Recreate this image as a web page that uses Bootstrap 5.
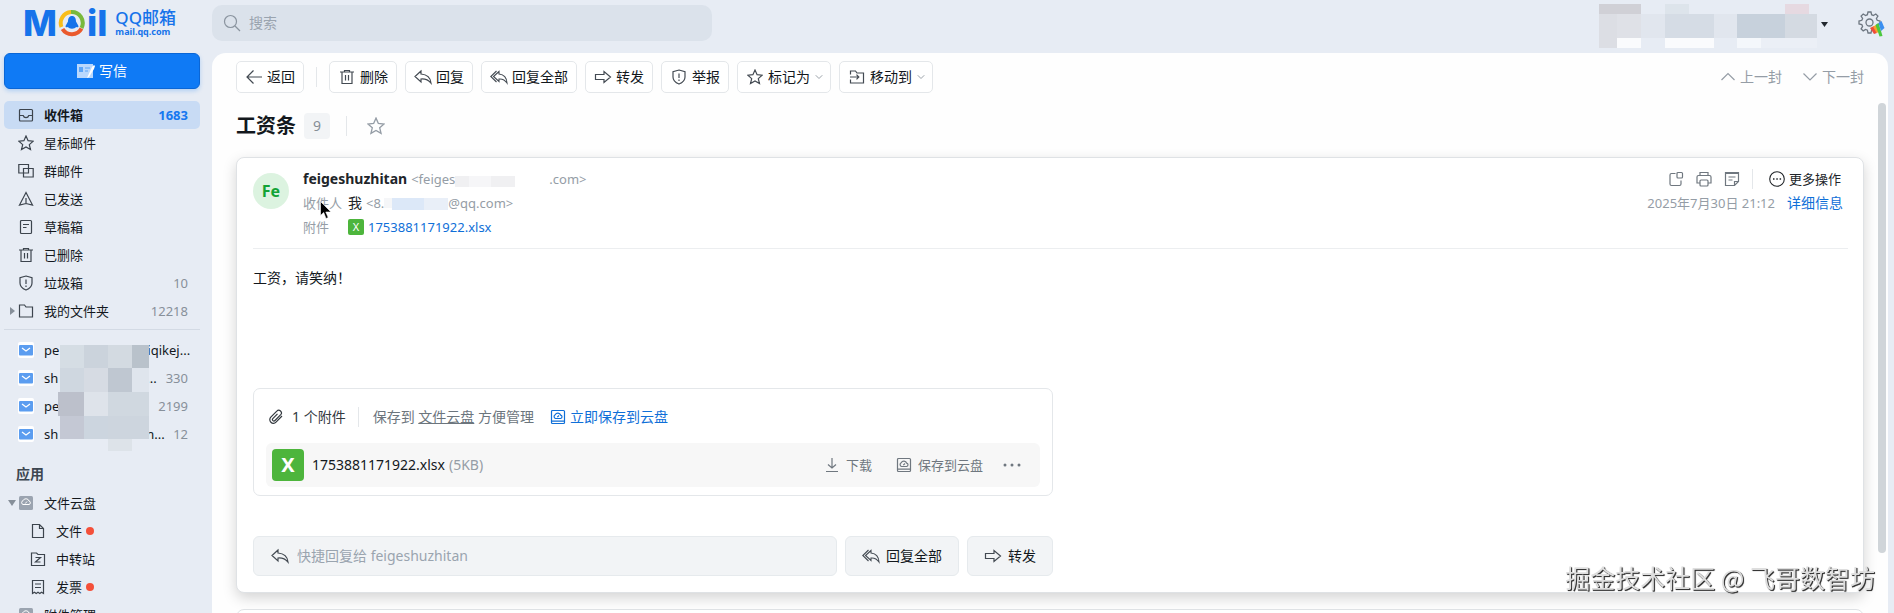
<!DOCTYPE html>
<html lang="zh-CN">
<head>
<meta charset="utf-8">
<meta name="viewport" content="width=device-width, initial-scale=1">
<title>QQ邮箱</title>
<link href="https://cdn.jsdelivr.net/npm/bootstrap@5.3.0/dist/css/bootstrap.min.css" rel="stylesheet">
<style>
  body { font-family: "Noto Sans", "Noto Sans CJK SC", sans-serif; font-size: 14px; line-height: 20px; color: #13181d; background: #e7ecf4; }
  a { text-decoration: none; color: inherit; }
  .ico { width: 16px; height: 16px; fill: none; stroke: currentColor; stroke-width: 1.2; flex: none; display: block; }
  .ico-lg { width: 18px; height: 18px; }
  .fs-13 { font-size: 13px; }
  .fs-14 { font-size: 14px; }
  .muted { color: #959da6; }
  .blue { color: #0f6fd8; }
  .rule { width: 1px; height: 20px; background: #e4e7ea; flex: none; }

  .topbar { height: 53px; flex: none; }
  .side { width: 212px; flex: none; }
  .logo { padding: 5px 0 12px 23px; color: #1673ea; }
  .logo-big { font-family: Inter, sans-serif; font-size: 36px; font-weight: 800; line-height: 36px; }
  .logo-ball { width: 28px; height: 28px; margin: 0 1px; display: block; }
  .logo-cn { font-size: 17px; line-height: 17px; font-weight: 500; }
  .logo-url { font-size: 9px; line-height: 11px; font-weight: 700; }
  .search { width: 500px; height: 36px; margin-top: 5px; padding: 0 11px; background: #dbe2eb; border-radius: 10px; color: #8a949f; }
  .search input, .quick input { border: 0; background: transparent; outline: 0; padding: 0; width: 100%; min-width: 0; }
  .search input::placeholder, .quick input::placeholder { color: #9aa4af; opacity: 1; }
  .search input { font-size: 14px; }
  .settings { margin: 0 8px 0 6px; }

  .compose { width: calc(100% - 16px); height: 36px; margin: 0 12px 12px 4px; background: #0f7af5; border: 1px solid #0a66d6; border-radius: 6px; color: #fff; box-shadow: 0 2px 4px #0f7af540; }
  .side-item { height: 28px; margin: 0 12px 0 4px; padding: 0 12px 0 14px; border-radius: 5px; font-size: 13px; position: relative; }
  .side-item .ico { color: #3c444d; margin-right: 10px; }
  .side-item.current { background: #c8dbf4; font-weight: 700; }
  .side-item.current .count { color: #1678f0; }
  .side-item.child { padding-left: 26px; }
  .count { color: #87909a; margin-left: auto; }
  .tri { position: absolute; left: 4px; width: 8px; height: 8px; fill: #868f99; }
  .side-rule { height: 1px; background: #d3dae4; margin: 4px 12px 6px 4px; }
  .mosaic { position: absolute; left: 58px; top: 9px; width: 91px; height: 106px; }
  .masked { width: 88px; flex: none; }
  .side-head { margin: 16px 0 5px 16px; font-size: 14px; line-height: 20px; font-weight: 700; color: #3c4650; }
  .dot { width: 8px; height: 8px; border-radius: 50%; background: #f4503a; margin-left: 4px; }

  .pane { background: #fefefe; border-radius: 14px 14px 0 0; margin-right: 6px; padding: 8px 24px 0; position: relative; }
  .thumb { position: absolute; right: 2px; top: 50px; bottom: 60px; width: 8px; border-radius: 4px; background: #d0d5d9; }
  .tool { height: 32px; padding: 0 8px 0 9px; border: 1px solid #e4e7ea; border-radius: 5px; background: #fff; color: #13181d; gap: 5px; white-space: nowrap; }
  .tool .ico { color: #434a52; }
  .tool .ico-lg { margin: 0 -1px; }
  .tool .chev { width: 8px; height: 8px; color: #9aa1a8; margin-right: -1px; }
  .title-row { margin: 20px 0 18px; height: 26px; }
  .subject { font-size: 20px; line-height: 26px; font-weight: 700; margin: 0; }
  .num { width: 26px; height: 26px; border-radius: 4px; background: #f2f4f6; color: #868e96; font-size: 14px; line-height: 26px; text-align: center; }
  .mail { background: #fff; border: 1px solid #dfe2e5; border-radius: 8px; padding: 9px 15px 16px 16px; box-shadow: 0 5px 14px #0000002b; }
  .mail-next { margin-top: 16px; height: 60px; border: 1px solid #dfe2e5; border-radius: 8px 8px 0 0; background: #fff; }
  .avatar { width: 36px; height: 36px; margin: 6px 14px 0 0; border-radius: 50%; background: #dcf3e0; color: #12a336; font-size: 16px; font-weight: 700; }
  .line { height: 24px; display: flex; align-items: center; white-space: nowrap; }
  .lbl { width: 45px; position: relative; }
  .pointer { position: absolute; left: 17px; top: 8px; width: 12px; height: 20px; }
  .xls { background: #4db53c; color: #fff; border-radius: 2px; width: 16px; height: 16px; font-size: 11px; line-height: 16px; text-align: center; }
  .xls-lg { width: 32px; height: 32px; border-radius: 4px; font-size: 20px; line-height: 32px; font-weight: 700; }
  .mail-head { padding-bottom: 9px; border-bottom: 1px solid #eceef0; }
  .mail-side { margin-right: 5px; }
  .mail-actions { gap: 12px; padding-right: 2px; color: #434a52; }
  .mail-body { padding-top: 19px; min-height: 139px; }
  .narrow { max-width: 800px; }
  .attach { border: 1px solid #e4e7ea; border-radius: 7px; padding: 16px 12px 8px; margin-bottom: 40px; }
  .attach-top { height: 24px; padding-left: 2px; margin-bottom: 14px; color: #33393f; }
  .attach-top .rule { margin: 0 14px 0 12px; }
  .file { height: 44px; border-radius: 6px; background: #f7f7f7; padding: 0 19px 0 6px; }
  .plain { border: 0; background: transparent; padding: 0; color: #6f777f; }
  .gap-6 { gap: 6px; }
  .quick { height: 40px; padding: 0 17px; border: 1px solid #e6eaed; border-radius: 6px; background: #f2f4f6; color: #434a52; }
  .quick-btn { height: 40px; padding: 0 16px; background: #f2f4f6; border: 1px solid #e6eaed; border-radius: 6px; white-space: nowrap; gap: 6px; color: #13181d; }
  .quick-btn .ico { color: #434a52; }
  .stamp { position: fixed; right: 19px; bottom: 20px; font-family: "Noto Sans CJK SC", sans-serif; font-size: 25px; line-height: 32px; color: #dedede; text-shadow: 1px 1px 1px #333, 1px 1px 0 #555; white-space: nowrap; pointer-events: none; }
</style>
</head>
<body class="vh-100 overflow-hidden d-flex flex-column">

<svg class="d-none">
  <symbol id="inbox" viewBox="0 0 16 16"><rect x="1.5" y="2.5" width="13" height="11.5" rx="1"/><path d="M1.5 8.5h3.7c.4 1.4 1.5 2.1 2.8 2.1s2.400-.7 2.800-2.100h3.700"/></symbol>
  <symbol id="star" viewBox="0 0 16 16"><path d="M8 1l2.100 4.700 5.100.5-3.900 3.400 1.200 5L8 12l-4.500 2.600 1.200-5L.8 6.200l5.100-.5z"/></symbol>
  <symbol id="group" viewBox="0 0 16 16"><path d="M.8 1.500h9.700v8.500H.8zM5.500 5.500h9.700V14H5.500z"/></symbol>
  <symbol id="sent" viewBox="0 0 16 16"><path d="M8 1.500L14.500 14 8 12.500 1.500 14zM8 7v5.500"/></symbol>
  <symbol id="draft" viewBox="0 0 16 16"><rect x="2.500" y="1.500" width="11" height="13" rx="1"/><path d="M5 5.500h6M5 8.500h3.500"/></symbol>
  <symbol id="trash" viewBox="0 0 16 16"><path d="M1 3h14M5.500 2.800V1.500h5v1.300M3 3v11.500h10V3M6.500 6v5.500M9.500 6v5.500"/></symbol>
  <symbol id="shield" viewBox="0 0 16 16"><path d="M8 1l6 1.600V8c0 3.500-2.500 5.700-6 7-3.500-1.300-6-3.500-6-7V2.600zM8 4.500V9M8 10.500V12"/></symbol>
  <symbol id="folder" viewBox="0 0 16 16"><path d="M1.500 2h5l1.500 2h6.500v10h-13z"/></symbol>
  <symbol id="env" viewBox="0 0 16 16"><rect width="16" height="16" rx="2" fill="#fff" stroke="none"/><rect x="1" y="3" width="14" height="10.500" rx="1" fill="#5b9df0" stroke="none"/><path d="M4 6l4 3 4-3" stroke="#fff"/></symbol>
  <symbol id="disk" viewBox="0 0 16 16"><rect x="1.500" y="1.500" width="13" height="13" rx="1"/><path d="M1.500 12.200h13M5.500 9.500a2 2 0 0 1-.3-3.700 3 3 0 0 1 5.500.4 1.700 1.700 0 0 1 0 3.300zM7.300 8.200l1.700-1.700"/></symbol>
  <symbol id="diskfill" viewBox="0 0 16 16"><rect x="1" y="1" width="14" height="14" rx="1.500" fill="#9ba4b0" stroke="none"/><path d="M5 9.500a2 2 0 0 1 0-3.800 3.200 3.200 0 0 1 6 .3 1.800 1.800 0 0 1 0 3.500zM7.300 8.500l1.700-2" stroke="#fff" stroke-width="1"/></symbol>
  <symbol id="file" viewBox="0 0 16 16"><path d="M2.500 1.500h7l4 4v9h-11zM9.500 1.500v4h4"/></symbol>
  <symbol id="transfer" viewBox="0 0 16 16"><path d="M1.500 2h5L8 3.500h6.500v11h-13zM5.500 6.500h5l-5 4.500h5"/></symbol>
  <symbol id="invoice" viewBox="0 0 16 16"><path d="M2.500 1.500h11v13l-2-1.300-1.700 1.300L8 13.200l-1.800 1.300-1.700-1.300-2 1.300zM5 5h6M5 8.500h6"/></symbol>
  <symbol id="back" viewBox="0 0 16 16"><path d="M7.500 1.500L1 8l6.500 6.500M1 8h15"/></symbol>
  <symbol id="reply" viewBox="0 0 18 16"><path d="M7 2L1 7.500 7 13V10c4.500-.3 7.500 1 10 4-.5-5-4-8.500-10-9z"/></symbol>
  <symbol id="replyall" viewBox="0 0 18 16"><path d="M9 2.500L3.500 7.500 9 12.500V10c3.500-.3 6 1 8 4-.3-5-3-8.500-8-9zM6.500 2L.8 7.500l5.700 5.500" stroke-width="1.100"/></symbol>
  <symbol id="forward" viewBox="0 0 18 16"><path d="M1.500 5.500H10V2.500l6.500 5.500L10 13.500v-3H1.500z"/></symbol>
  <symbol id="move" viewBox="0 0 16 16"><path d="M1.500 5.500V2h5L8 4h6.500v10h-13v-3.500M1 8h8.500M7.500 5.700L9.800 8l-2.300 2.300"/></symbol>
  <symbol id="down" viewBox="0 0 16 16"><path d="M1.500 4.500L8 11l6.500-6.500"/></symbol>
  <symbol id="up" viewBox="0 0 16 16"><path d="M1.500 11L8 4.500l6.500 6.500"/></symbol>
  <symbol id="popout" viewBox="0 0 16 16"><path d="M7.500 2.500h-4c-1 0-1.500.5-1.500 1.500v9c0 1 .5 1.500 1.500 1.500h8c1 0 1.500-.5 1.500-1.500V9.500"/><rect x="9" y="1.500" width="5.500" height="5.500" rx="1"/></symbol>
  <symbol id="print" viewBox="0 0 16 16"><path d="M4 4.500v-3h8v3M4 12H1V6c0-1 .5-1.500 1.500-1.500h11c1 0 1.500.5 1.500 1.500v6h-3"/><rect x="4" y="9" width="8" height="6" rx="1"/></symbol>
  <symbol id="note" viewBox="0 0 16 16"><path d="M1.500 1.500h13v9l-4 4h-9zM1.500 2.500h13M14.500 10.500h-4v4M4.500 6h7M4.500 9h4"/></symbol>
  <symbol id="more" viewBox="0 0 16 16"><circle cx="8" cy="8" r="7.300" stroke-width="1.100"/><path d="M4 8h1.500M7.300 8h1.500M10.600 8h1.500" stroke-width="1.500"/></symbol>
  <symbol id="clip" viewBox="0 0 16 16"><path d="M14 7l-6 6.200a3.600 3.600 0 0 1-5.200-5L8.800 2.200a2.600 2.600 0 0 1 3.900 3.500L7 11.500a1.400 1.400 0 0 1-2.200-1.900l4.700-4.800"/></symbol>
  <symbol id="save" viewBox="0 0 16 16"><path d="M8 1v10M4 7.500L8 11l4-3.500M2 14.500h12"/></symbol>
</svg>

<header class="topbar d-flex align-items-start">
  <a href="#" class="side logo d-flex align-items-center">
    <span class="logo-big">M</span>
    <svg class="logo-ball" viewBox="0 0 28 28" fill="none" stroke-width="4">
      <path d="M3.500 18A11 11 0 0 1 13 3" stroke="#f9bd19"/><path d="M13 3a11 11 0 0 1 10.500 16" stroke="#79b93c"/><path d="M23.500 19.500A11 11 0 0 1 4.500 20" stroke="#ea5a2d"/>
      <path d="M14 7c-3 0-4 2.500-4 5.500L7.500 17c0 2 1.500 1 2.500 1 1 2.300 7 2.300 8 0 1 0 2.500 1 2.500-1L18 12.500C18 9.500 17 7 14 7z" fill="#1673ea"/>
    </svg>
    <span class="logo-big">il</span>
    <span class="d-flex flex-column ms-1 ps-1">
      <span class="logo-cn">QQ邮箱</span><span class="logo-url">mail.qq.com</span>
    </span>
  </a>
  <label class="search d-flex align-items-center gap-2">
    <svg class="ico ico-lg" viewBox="0 0 18 18"><circle cx="7.500" cy="7.500" r="6"/><path d="M12 12l5 5"/></svg>
    <input type="text" placeholder="搜索" aria-label="搜索">
  </label>
  <div class="ms-auto d-flex align-items-center">
    <svg width="218" height="48" shape-rendering="crispEdges">
      <path fill="#d0d0d6" d="M0 4h42v10H0z"/><path fill="#dcdee4" d="M0 14h18v34H0z"/><path fill="#dfe1e7" d="M18 14h24v24H18z"/><path fill="#fafbfd" d="M18 38h24v10H18zM66 38h49v10H66z"/>
      <path fill="#e1e6ee" d="M42 14h24v24H42zM115 14h23v24h-23z"/><path fill="#dde4eb" d="M66 4h24v10H66z"/><path fill="#d5dce5" d="M66 14h49v24H66z"/>
      <path fill="#c7d1dc" d="M138 14h48v24h-48z"/><path fill="#d4dae2" d="M186 14h32v24h-32z"/><path fill="#e6d9e1" d="M186 4h24v10h-24z"/><path fill="#f4f7fb" d="M138 38h24v10h-24z"/><path fill="#ebeff6" d="M162 38h56v10h-56z"/>
    </svg>
    <svg class="ms-1 me-4" width="7" height="5"><path d="M0 0h7L3.500 5z" fill="#22282e"/></svg>
    <button class="plain settings" type="button" aria-label="设置">
      <svg width="28" height="26" viewBox="0 0 28 26" fill="none" stroke="#6e7781" stroke-width="1.300">
        <path d="M10 1h3l.6 2.700 1.800.8 2.400-1.500 2.100 2.100-1.500 2.400.8 1.800 2.800.7v3l-2.800.6-.8 1.800 1.500 2.400-2.100 2.100-2.400-1.500-1.800.8L13 22h-3l-.6-2.800-1.800-.8-2.400 1.500-2.100-2.100 1.500-2.400-.8-1.800L1 13v-3l2.800-.7.8-1.800-1.500-2.400L5.200 3l2.400 1.500 1.800-.8z"/><circle cx="11.500" cy="11.500" r="3.500"/>
        <g stroke="none"><path fill="#ee4b3b" d="M12 17l4-2 3 7-3 1z"/><path fill="#f6a12b" d="M15 15.500l3-1.500 3 7-2.500 1z"/><path fill="#4cc83e" d="M17.500 14l3-2 2.500 8 1.500 5-3 .5-1.500-4.500z"/><path fill="#3b8ff0" d="M20.500 12l3-2 3 7-3.500 3z"/></g>
      </svg>
    </button>
  </div>
</header>

<div class="d-flex flex-grow-1 overflow-hidden">
  <aside class="side">
    <button class="compose d-flex align-items-center justify-content-center gap-1" type="button">
      <svg width="18" height="16" viewBox="0 0 18 16"><path d="M0 1h16v14H0z" fill="#b9d8fd"/><path d="M2 4h4v5H2z" fill="#5ba5f8"/><path d="M8 5h5M8 8h3" stroke="#5ba5f8"/><path d="M10 15L15 4l2-2 1 1-1 3-5 8z" fill="#fff"/></svg>写信</button>
    <nav>
      <a href="#" class="side-item current d-flex align-items-center"><svg class="ico"><use href="#inbox"/></svg>收件箱<span class="count">1683</span></a>
      <a href="#" class="side-item d-flex align-items-center"><svg class="ico"><use href="#star"/></svg>星标邮件</a>
      <a href="#" class="side-item d-flex align-items-center"><svg class="ico"><use href="#group"/></svg>群邮件</a>
      <a href="#" class="side-item d-flex align-items-center"><svg class="ico"><use href="#sent"/></svg>已发送</a>
      <a href="#" class="side-item d-flex align-items-center"><svg class="ico"><use href="#draft"/></svg>草稿箱</a>
      <a href="#" class="side-item d-flex align-items-center"><svg class="ico"><use href="#trash"/></svg>已删除</a>
      <a href="#" class="side-item d-flex align-items-center"><svg class="ico"><use href="#shield"/></svg>垃圾箱<span class="count">10</span></a>
      <a href="#" class="side-item d-flex align-items-center"><svg class="tri" viewBox="0 0 8 8"><path d="M2 0l5 4-5 4z"/></svg><svg class="ico"><use href="#folder"/></svg>我的文件夹<span class="count">12218</span></a>
    </nav>
    <div class="side-rule"></div>
    <nav class="position-relative">
      <a href="#" class="side-item d-flex align-items-center text-nowrap"><svg class="ico"><use href="#env"/></svg>pe<span class="masked"></span><span class="ms-auto">iqikej...</span></a>
      <a href="#" class="side-item d-flex align-items-center"><svg class="ico"><use href="#env"/></svg>sh<span class="masked"></span>...<span class="count">330</span></a>
      <a href="#" class="side-item d-flex align-items-center"><svg class="ico"><use href="#env"/></svg>pe<span class="masked"></span><span class="count">2199</span></a>
      <a href="#" class="side-item d-flex align-items-center"><svg class="ico"><use href="#env"/></svg>sh<span class="masked"></span>n...<span class="count">12</span></a>
      <svg class="mosaic" viewBox="0 0 91 106" shape-rendering="crispEdges">
        <path fill="#d5dde4" d="M2 0h24v23H2z"/><path fill="#cbd3dc" d="M26 0h24v23H26z"/><path fill="#d3dae1" d="M50 0h24v23H50z"/><path fill="#b9c2cb" d="M74 0h17v23H74z"/>
        <path fill="#cfd7e0" d="M2 23h24v24H2z"/><path fill="#d6dbe3" d="M26 23h24v24H26z"/><path fill="#bfc7d1" d="M50 23h24v24H50z"/><path fill="#dfe5ed" d="M74 23h17v24H74z"/>
        <path fill="#bcc0cb" d="M0 47h26v24H0z"/><path fill="#dee3ea" d="M26 47h24v24H26z"/><path fill="#d0d8e0" d="M50 47h41v24H50z"/>
        <path fill="#c4c8d4" d="M2 71h24v23H2z"/><path fill="#ccd5df" d="M26 71h24v23H26z"/><path fill="#cdd5de" d="M50 71h41v23H50z"/><path fill="#dde3e9" d="M50 94h24v12H50z"/>
      </svg>
    </nav>
    <h2 class="side-head">应用</h2>
    <nav>
      <a href="#" class="side-item d-flex align-items-center"><svg class="tri" viewBox="0 0 8 8"><path d="M0 1h8L4 7z"/></svg><svg class="ico"><use href="#diskfill"/></svg>文件云盘</a>
      <a href="#" class="side-item child d-flex align-items-center"><svg class="ico"><use href="#file"/></svg>文件<span class="dot"></span></a>
      <a href="#" class="side-item child d-flex align-items-center"><svg class="ico"><use href="#transfer"/></svg>中转站</a>
      <a href="#" class="side-item child d-flex align-items-center"><svg class="ico"><use href="#invoice"/></svg>发票<span class="dot"></span></a>
      <a href="#" class="side-item d-flex align-items-center"><svg class="ico"><use href="#diskfill"/></svg>附件管理</a>
    </nav>
  </aside>

  <main class="pane flex-grow-1 overflow-hidden">
    <div class="d-flex align-items-center gap-2">
      <button type="button" class="tool d-flex align-items-center"><svg class="ico"><use href="#back"/></svg>返回</button>
      <span class="rule ms-1 me-1"></span>
      <button type="button" class="tool d-flex align-items-center"><svg class="ico"><use href="#trash"/></svg>删除</button>
      <button type="button" class="tool d-flex align-items-center"><svg class="ico ico-lg"><use href="#reply"/></svg>回复</button>
      <button type="button" class="tool d-flex align-items-center"><svg class="ico ico-lg"><use href="#replyall"/></svg>回复全部</button>
      <button type="button" class="tool d-flex align-items-center"><svg class="ico ico-lg"><use href="#forward"/></svg>转发</button>
      <button type="button" class="tool d-flex align-items-center"><svg class="ico"><use href="#shield"/></svg>举报</button>
      <button type="button" class="tool d-flex align-items-center"><svg class="ico"><use href="#star"/></svg>标记为<svg class="ico chev"><use href="#down" stroke-width="2"/></svg></button>
      <button type="button" class="tool d-flex align-items-center"><svg class="ico"><use href="#move"/></svg>移动到<svg class="ico chev"><use href="#down" stroke-width="2"/></svg></button>
      <div class="ms-auto d-flex gap-3 text-nowrap muted">
        <a href="#" class="d-flex align-items-center gap-1"><svg class="ico"><use href="#up"/></svg>上一封</a>
        <a href="#" class="d-flex align-items-center gap-1 ms-1"><svg class="ico"><use href="#down"/></svg>下一封</a>
      </div>
    </div>

    <div class="title-row d-flex align-items-center">
      <h1 class="subject me-2">工资条</h1><span class="num">9</span>
      <span class="rule mx-3"></span>
      <button type="button" class="plain ms-1" aria-label="星标"><svg class="ico ico-lg muted"><use href="#star"/></svg></button>
    </div>

    <article class="mail">
      <header class="mail-head d-flex">
        <span class="avatar d-flex align-items-center justify-content-center">Fe</span>
        <div class="fs-13 muted">
          <div class="line"><b class="text-body fs-14 me-1">feigeshuzhitan</b>&lt;feiges<svg width="94" height="16" shape-rendering="crispEdges"><path fill="#f0f0f2" d="M0 5h14v11H0zM36 5h24v11H36z"/><path fill="#f6f6f8" d="M14 5h22v11H14z"/></svg>.com&gt;</div>
          <div class="line"><span class="lbl">收件人<svg class="pointer" viewBox="0 0 12 20"><path d="M.5.5v14l3.200-3 2.300 6 2.200-1-2.400-5.500H11z" fill="#000" stroke="#fff" stroke-width=".6"/></svg></span><span class="text-body fs-14 me-1">我</span>&lt;8.<svg width="64" height="14" shape-rendering="crispEdges"><path fill="#f5f6f8" d="M0 2h10v10H0z"/><path fill="#dce8f8" d="M8 2h46v12H8z"/><path fill="#e9eff8" d="M40 2h24v12H40z"/></svg>@qq.com&gt;</div>
          <div class="line"><span class="lbl">附件</span><span class="xls me-1">X</span><a href="#" class="blue">1753881171922.xlsx</a></div>
        </div>
        <div class="mail-side ms-auto d-flex flex-column align-items-end">
          <div class="line mail-actions">
            <button type="button" class="plain" aria-label="新窗口打开"><svg class="ico"><use href="#popout"/></svg></button>
            <button type="button" class="plain" aria-label="打印"><svg class="ico"><use href="#print"/></svg></button>
            <button type="button" class="plain" aria-label="便签"><svg class="ico"><use href="#note"/></svg></button>
            <span class="rule me-1"></span>
            <button type="button" class="plain text-body fs-13 d-flex align-items-center gap-1"><svg class="ico"><use href="#more"/></svg>更多操作</button>
          </div>
          <div class="line"><time class="muted fs-13 me-2 pe-1">2025年7月30日 21:12</time><a href="#" class="blue">详细信息</a></div>
        </div>
      </header>

      <div class="mail-body">工资，请笑纳！</div>

      <section class="attach narrow">
        <div class="attach-top d-flex align-items-center text-nowrap">
          <svg class="ico me-2"><use href="#clip"/></svg><span>1 个附件</span>
          <span class="rule"></span>
          <span class="text-secondary">保存到 <a href="#" class="text-decoration-underline">文件云盘</a> 方便管理</span>
          <a href="#" class="blue d-flex align-items-center gap-1 ms-3"><svg class="ico"><use href="#disk"/></svg>立即保存到云盘</a>
        </div>
        <div class="file d-flex align-items-center text-nowrap">
          <span class="xls xls-lg">X</span><span class="ms-2">1753881171922.xlsx</span><span class="muted gap-6 ms-1">(5KB)</span>
          <button type="button" class="plain fs-13 d-flex align-items-center gap-6 ms-auto me-4"><svg class="ico"><use href="#save"/></svg>下载</button>
          <button type="button" class="plain fs-13 d-flex align-items-center gap-6 me-3"><svg class="ico"><use href="#disk"/></svg>保存到云盘</button>
          <button type="button" class="plain ms-1" aria-label="更多"><svg width="18" height="4" class="d-block" fill="#6f777f"><circle cx="2" cy="2" r="1.500"/><circle cx="9" cy="2" r="1.500"/><circle cx="16" cy="2" r="1.500"/></svg></button>
        </div>
      </section>

      <div class="narrow d-flex gap-2">
        <label class="quick d-flex align-items-center flex-grow-1 gap-2"><svg class="ico ico-lg"><use href="#reply"/></svg><input type="text" placeholder="快捷回复给 feigeshuzhitan" aria-label="快捷回复"></label>
        <button type="button" class="quick-btn d-flex align-items-center"><svg class="ico ico-lg"><use href="#replyall"/></svg>回复全部</button>
        <button type="button" class="quick-btn d-flex align-items-center"><svg class="ico ico-lg"><use href="#forward"/></svg>转发</button>
      </div>
    </article>
    <article class="mail-next"></article>
    <div class="thumb"></div>
  </main>
</div>
<div class="stamp">掘金技术社区 @ 飞哥数智坊</div>
<script src="https://cdn.jsdelivr.net/npm/bootstrap@5.3.0/dist/js/bootstrap.bundle.min.js"></script>
</body>
</html>
